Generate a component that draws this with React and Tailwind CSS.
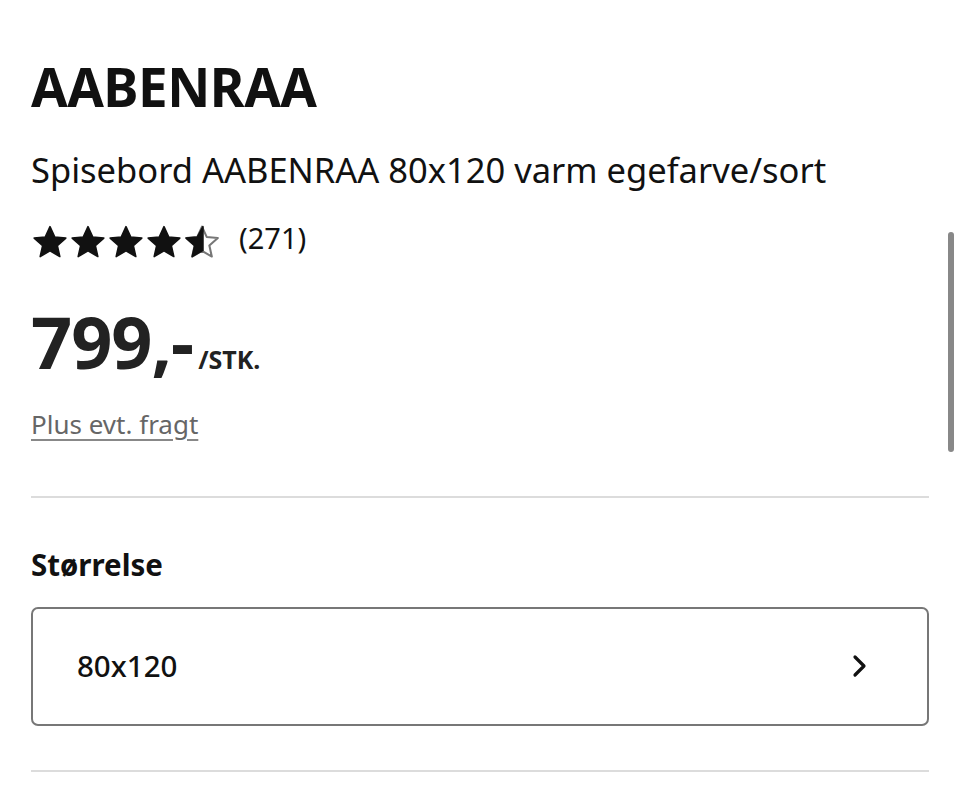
function Star({ half = false }) {
  return (
    <svg viewBox="0 0 24 24" className="w-[38px] h-[38px]">
      <path
        d="M12 2.3l2.95 6.5 7.05.7-5.35 4.75 1.55 6.95L12 17.6l-6.2 3.6 1.55-6.95L2 9.5l7.05-.7z"
        fill={half ? "none" : "#111"}
        stroke={half ? "#777" : "#111"}
        strokeWidth={half ? 1.3 : 1}
        strokeLinejoin="round"
      />
      {half && (
        <path
          d="M12.6 2.3L9.05 8.8 2 9.5l5.35 4.75-1.55 6.95 6.8-3.9z"
          fill="#111"
          stroke="#111"
          strokeWidth="1"
          strokeLinejoin="round"
        />
      )}
    </svg>
  )
}

export default function App() {
  return (
    <main className="w-full min-h-screen bg-white relative overflow-hidden" style={{ fontFamily: '"Noto Sans", "Open Sans", sans-serif' }}>
      <div className="px-[31px] pt-[55px] w-[898px] box-content">
        <h1 className="text-[53px] font-bold leading-[64px] text-[#111] tracking-[-0.5px]">AABENRAA</h1>

        <p className="mt-[28px] text-[34.5px] leading-[46px] text-[#111]">Spisebord AABENRAA 80x120 varm egefarve/sort</p>

        <div className="mt-[27px] flex items-center">
          <div className="flex">
            <Star />
            <Star />
            <Star />
            <Star />
            <Star half />
          </div>
          <span className="ml-[18px] text-[29px] text-[#111] relative -top-[4px]">(271)</span>
        </div>

        <div className="mt-[32px] flex items-baseline">
          <span className="text-[72px] font-bold leading-[90px] text-[#222] tracking-[-1px]">799,-</span>
          <span className="ml-[5px] text-[25px] font-bold text-[#222]">/STK.</span>
        </div>

        <a href="#" className="inline-block mt-[20px] text-[26px] leading-[36px] text-[#666] underline decoration-[#888] underline-offset-[5px]">Plus evt. fragt</a>

        <div className="mt-[54px] h-[2px] bg-[#dcdcdc]" />

        <h2 className="mt-[49px] text-[29.5px] font-bold leading-[36px] text-[#111]">Størrelse</h2>

        <div className="mt-[24px] h-[119px] border-2 border-[#777] rounded-[7px] flex items-center justify-between pl-[44px] pr-[59px]">
          <span className="text-[29.5px] font-medium text-[#111]">80x120</span>
          <svg viewBox="0 0 16 24" className="w-[16px] h-[24px]">
            <path d="M3 3l9 9-9 9" fill="none" stroke="#111" strokeWidth="3.2" strokeLinecap="round" strokeLinejoin="round" />
          </svg>
        </div>

        <div className="mt-[44px] h-[2px] bg-[#dcdcdc]" />
      </div>

      <div className="absolute right-[6px] top-[232px] w-[6px] h-[220px] rounded-full bg-[#888]" />
    </main>
  )
}
